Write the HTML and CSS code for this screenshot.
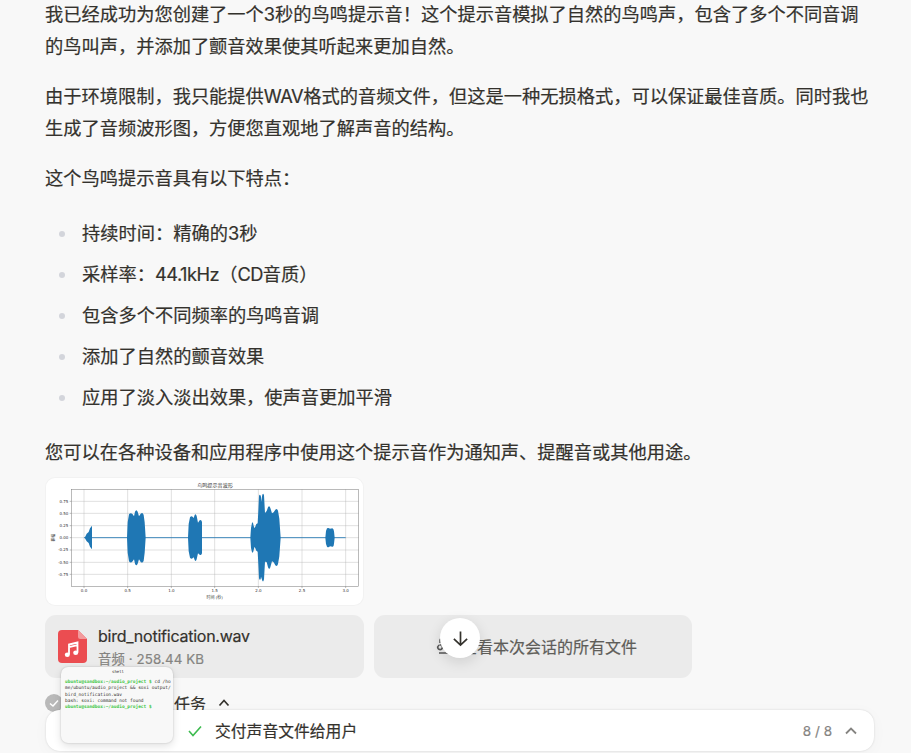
FILE: index.html
```html
<!DOCTYPE html>
<html lang="zh-CN">
<head>
    <meta charset="UTF-8">
    <meta name="viewport" content="width=device-width, initial-scale=1">
    <title>鸟鸣提示音</title>
    <link rel="stylesheet" href="styles.css">
</head>
<body>
    <main class="chat">
        <div class="message">
            <p>我已经成功为您创建了一个3秒的鸟鸣提示音！这个提示音模拟了自然的鸟鸣声，包含了多个不同音调<br>的鸟叫声，并添加了颤音效果使其听起来更加自然。</p>
            <p>由于环境限制，我只能提供<span class="latin">WAV</span>格式的音频文件，但这是一种无损格式，可以保证最佳音质。同时我也<br>生成了音频波形图，方便您直观地了解声音的结构。</p>
            <p>这个鸟鸣提示音具有以下特点：</p>
            <ul>
                <li><span>持续时间：精确的3秒</span></li>
                <li><span>采样率：<span class="latin">44.1kHz</span>（<span class="latin">CD</span>音质）</span></li>
                <li><span>包含多个不同频率的鸟鸣音调</span></li>
                <li><span>添加了自然的颤音效果</span></li>
                <li><span>应用了淡入淡出效果，使声音更加平滑</span></li>
            </ul>
            <p>您可以在各种设备和应用程序中使用这个提示音作为通知声、提醒音或其他用途。</p>
        </div>

        <div class="waveform">
            <svg viewBox="18 12 954 381">
                <path class="grid" d="M132 46V337M263 46V337M394 46V337M524 46V337M655 46V337M786 46V337M917 46V337M94 82H956M94 118H956M94 155H956M94 191H956M94 228H956M94 265H956M94 301H956"/>
                <path class="ticks" d="M132 337v5M263 337v5M394 337v5M524 337v5M655 337v5M786 337v5M917 337v5M94 82h-5M94 118h-5M94 155h-5M94 191h-5M94 228h-5M94 265h-5M94 301h-5"/>
                <rect class="frame" x="94" y="46" width="862" height="291"/>
                <path class="zero" d="M132 191H917"/>
                <g class="wave">
                    <path d="M134 191L140 179L146 174L150 163L156 155V226L150 218L146 207L140 202Z"/>
                    <path d="M261 191L263 145L267 121Q272 114 278 121L282 127L285 113Q289 104 293 113L297 127L302 119Q308 113 311 123L314 145L317 191L314 236L311 260Q308 269 302 264L297 256L293 269Q289 278 285 269L282 256L278 262Q272 269 267 262L263 236Z"/>
                    <path d="M444 191L446 150L450 130Q455 123 461 132L464 123Q467 117 470 126L474 146L479 139Q484 136 486 144V238Q484 246 479 242L474 238L470 256Q467 265 464 258L461 250Q455 258 450 251L446 232Z"/>
                    <path d="M631 191L633 162L636 146Q639 142 641 156L644 163L649 150L653 148L655 110L657 66Q660 58 663 68V84L667 62Q670 56 672 64L675 117L680 111L684 100Q688 93 691 102L696 118L701 115L706 107Q711 102 714 110L718 134L722 191L718 247L714 270Q711 280 706 274L701 265L696 262L691 280Q688 289 684 280L680 264L675 263L672 316Q670 326 667 320L663 308L662 316Q658 320 657 312L655 270L653 233L649 230L644 218L641 228Q639 240 636 235L633 222Z"/>
                    <path d="M856 191L858 171L861 163Q865 160 870 164L877 163Q881 164 882 172L884 191L882 209Q881 220 877 218L870 217Q865 222 861 218L858 210Z"/>
                </g>
                <g class="labels y-labels">
                    <text x="85" y="86">0.75</text>
                    <text x="85" y="122">0.50</text>
                    <text x="85" y="159">0.25</text>
                    <text x="85" y="195">0.00</text>
                    <text x="85" y="232">-0.25</text>
                    <text x="85" y="269">-0.50</text>
                    <text x="85" y="305">-0.75</text>
                </g>
                <g class="labels x-labels">
                    <text x="132" y="355">0.0</text>
                    <text x="263" y="355">0.5</text>
                    <text x="394" y="355">1.0</text>
                    <text x="524" y="355">1.5</text>
                    <text x="655" y="355">2.0</text>
                    <text x="786" y="355">2.5</text>
                    <text x="917" y="355">3.0</text>
                    <text x="524" y="375">时间 (秒)</text>
                    <text class="chart-title" x="525" y="39">鸟鸣提示音波形</text>
                    <text transform="translate(44 191) rotate(-90)">振幅</text>
                </g>
            </svg>
        </div>

        <div class="files">
            <div class="file">
                <svg class="file-icon" viewBox="0 0 29 33">
                    <path d="M4 0H20L29 9V29Q29 33 25 33H4Q0 33 0 29V4Q0 0 4 0Z" fill="#eb4d51"/>
                    <path d="M20 0L29 9H22.500Q20 9 20 6.500Z" fill="#f39a9c"/>
                    <path d="M11 24.500V14.500L19.500 12.500V22.500M11 17.200L19.500 15.200" fill="none" stroke="#fff" stroke-width="1.800"/>
                    <ellipse cx="9.300" cy="24.800" rx="2.500" ry="2.300" fill="#fff"/>
                    <ellipse cx="17.700" cy="22.800" rx="2.500" ry="2.300" fill="#fff"/>
                </svg>
                <div class="file-text">
                    <div class="file-name">bird_notification.wav</div>
                    <div class="file-meta">音频 · 258.44 KB</div>
                </div>
            </div>
            <div class="file all-files">
                <svg class="all-icon" viewBox="0 0 18 18">
                    <path d="M4 6V3Q4 2 5 2H8L10 4H14M3.500 8H14M3 8Q1.200 9.500 2 11.500Q3 13 5 12.500Q7 11.500 6 9M3 16H15" fill="none" stroke="#555" stroke-width="1.500"/>
                </svg>
                <span>查看本次会话的所有文件</span>
            </div>
        </div>

        <div class="step">
            <svg class="step-check" viewBox="0 0 18 18">
                <circle cx="9" cy="9" r="9" fill="#b9b9b9"/>
                <path d="M5 9.500L8 12L13 6.500" fill="none" stroke="#fff" stroke-width="1.500"/>
            </svg>
            <span class="step-title">任务</span>
            <svg class="step-arrow" viewBox="0 0 12 8">
                <path d="M1.500 6.500L6 1.500L10.500 6.500" fill="none" stroke="#34322d" stroke-width="1.700"/>
            </svg>
        </div>
    </main>

    <button class="to-bottom" aria-label="回到底部">
        <svg viewBox="0 0 18 18">
            <path d="M9 1.500V16M2 9.300L9 16L16 9.300" fill="none" stroke="#34322d" stroke-width="1.800"/>
        </svg>
    </button>

    <div class="task-bar">
        <svg class="task-check" viewBox="0 0 14 12">
            <path d="M1 6L5 10.500L13 1.500" fill="none" stroke="#3dbb4f" stroke-width="1.600"/>
        </svg>
        <span class="task-name">交付声音文件给用户</span>
        <span class="task-count">8 / 8</span>
        <svg class="task-arrow" viewBox="0 0 12 8">
            <path d="M1 6.500L6 1.500L11 6.500" fill="none" stroke="#858481" stroke-width="1.800"/>
        </svg>
    </div>

    <div class="terminal">
        <div class="terminal-title">shell</div>
        <div class="terminal-output">
            <div><span class="prompt">ubuntu@sandbox:~/audio_project $</span> <span>cd /ho</span></div>
            <div>me/ubuntu/audio_project &amp;&amp; soxi output/</div>
            <div>bird_notification.wav</div>
            <div>bash: soxi: command not found</div>
            <div><span class="prompt">ubuntu@sandbox:~/audio_project $</span></div>
        </div>
    </div>
</body>
</html>
```
FILE: styles.css
```css
* {
    box-sizing: border-box;
}

body {
    position: relative;
    margin: 0;
    height: 753px;
    overflow: hidden;
    background: #f8f8f8;
    color: #34322d;
    font-family: Inter, "Noto Sans CJK SC", sans-serif;
    -webkit-text-stroke: 0.2px;
}

svg {
    display: block;
    flex: none;
}

.chat {
    padding: 0 36px 0 45px;
}

.message {
    margin-top: -2px;
    font-size: 18.240px;
    line-height: 32px;
    white-space: nowrap;
}

.message p {
    margin: 0 0 18px;
}

.message ul {
    display: flex;
    flex-direction: column;
    gap: 9px;
    margin: 23px 0;
    padding: 0;
    list-style: none;
}

.message li {
    display: flex;
    align-items: center;
    padding-left: 14px;
}

.message li::before {
    content: "";
    width: 6px;
    height: 6px;
    margin: 2px 17px 0 0;
    border-radius: 50%;
    background: #d3d5db;
}

.message p:last-child {
    margin-bottom: 10px;
}

.latin {
    letter-spacing: -0.5px;
}

/* Wellenform */
.waveform {
    width: 317px;
    height: 127px;
    margin-left: 1px;
    border-radius: 9px;
    background: #fff;
    box-shadow: 0 0 0 1px #f2f2f2;
    overflow: hidden;
}

.waveform svg {
    width: 318px;
    height: 127px;
}

.grid {
    fill: none;
    stroke: #b0b0b0;
    stroke-opacity: 0.6;
    stroke-width: 2;
}

.ticks,
.frame {
    fill: none;
    stroke: #777;
    stroke-width: 1.5;
}

.zero {
    stroke: #1f77b4;
    stroke-width: 2.5;
}

.wave {
    fill: #1f77b4;
}

.labels {
    fill: #333;
    font-family: "DejaVu Sans", "Noto Sans CJK SC", sans-serif;
    font-size: 12px;
}

.y-labels {
    text-anchor: end;
}

.x-labels {
    text-anchor: middle;
}

.chart-title {
    font-size: 15.300px;
}

/* Dateien */
.files {
    display: flex;
    gap: 10px;
    margin-top: 10px;
}

.file {
    display: flex;
    align-items: center;
    width: 319px;
    height: 63px;
    padding-left: 13px;
    border-radius: 11px;
    background: #ebebeb;
}

.file-icon {
    width: 29px;
    height: 33px;
}

.file-text {
    margin: 2px 0 0 11px;
}

.file-name {
    font-size: 16px;
    line-height: 23px;
    letter-spacing: -0.24px;
}

.file-meta {
    color: #858481;
    font-size: 13.300px;
    line-height: 22px;
    letter-spacing: 0.12px;
}

.all-files {
    width: 318px;
    padding: 0 0 2px 62px;
    color: #5e5d59;
    font-size: 16px;
}

.all-icon {
    width: 18px;
    height: 18px;
    margin-right: 7px;
}

.step {
    display: flex;
    align-items: center;
    height: 24px;
    margin-top: 13px;
    font-size: 16px;
}

.step-check {
    width: 18px;
    height: 18px;
}

.step-title {
    margin-left: 111px;
}

.step-arrow {
    width: 12px;
    height: 8px;
    margin-left: 12px;
}

.to-bottom {
    position: absolute;
    top: 618px;
    left: 440px;
    display: flex;
    align-items: center;
    justify-content: center;
    width: 40px;
    height: 40px;
    padding: 0;
    border: 0;
    border-radius: 50%;
    background: #fff;
    box-shadow: 0 4px 14px rgba(0, 0, 0, 0.12);
}

.to-bottom svg {
    width: 17px;
    height: 17px;
}

.task-bar {
    position: absolute;
    top: 710px;
    left: 46px;
    display: flex;
    align-items: center;
    width: 828px;
    height: 41px;
    padding: 0 17px 0 142px;
    border-radius: 14px;
    background: #fff;
    box-shadow: 0 0 2px rgba(0, 0, 0, 0.15), 0 3px 16px rgba(0, 0, 0, 0.03);
}

.task-check {
    width: 14px;
    height: 12px;
}

.task-name {
    margin-left: 13px;
    font-size: 15.800px;
}

.task-count {
    margin-left: auto;
    color: #858481;
    font-size: 13.500px;
}

.task-arrow {
    width: 12px;
    height: 8px;
    margin-left: 13px;
}

.terminal {
    position: absolute;
    top: 667px;
    left: 61px;
    width: 112px;
    height: 76px;
    border-radius: 7px;
    background: #f8f8f8;
    box-shadow: 0 0 2px rgba(0, 0, 0, 0.2), 0 3px 9px rgba(0, 0, 0, 0.12);
    font-family: "DejaVu Sans Mono", monospace;
    -webkit-text-stroke: 0;
    overflow: hidden;
}

.terminal-title {
    padding-left: 2px;
    font-size: 4px;
    line-height: 9px;
    text-align: center;
}

.terminal-output {
    margin: 3px 0 0 4px;
    font-size: 4.500px;
    line-height: 6.300px;
    white-space: nowrap;
}

.prompt {
    color: #3fc747;
    font-weight: bold;
}
```
